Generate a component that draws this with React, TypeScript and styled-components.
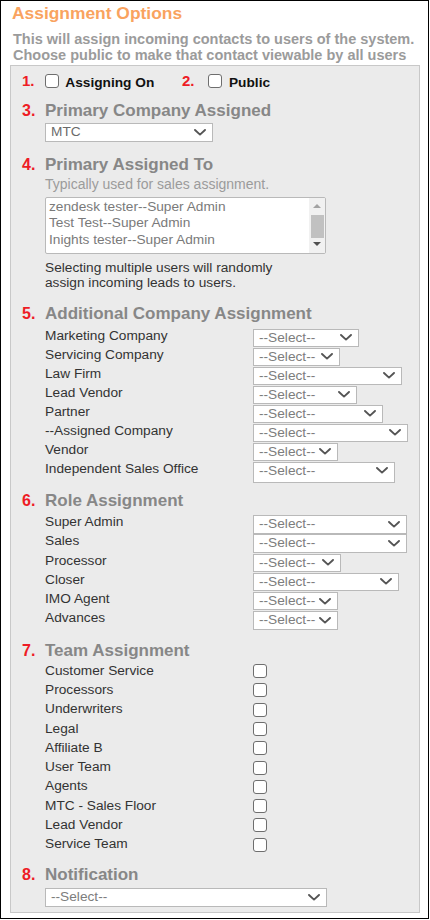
import React from "react";
import styled, { createGlobalStyle } from "styled-components";

const Global = createGlobalStyle`
  html, body { margin: 0; padding: 0; background: #fff; }
  body { font-family: "Liberation Sans", Arial, sans-serif; }
`;

const Frame = styled.div`
  box-sizing: border-box;
  width: 429px;
  height: 919px;
  border: 1px solid #000;
  padding: 2px 8px 0 9px;
  background: #fff;
`;

const Title = styled.h1`
  margin: 0 0 0 2px;
  font-size: 17.4px;
  line-height: 20px;
  font-weight: bold;
  color: #f9a35f;
`;

const Intro = styled.p`
  margin: 8px 0 0 3px;
  font-size: 14.5px;
  line-height: 16px;
  font-weight: bold;
  color: #9b9b9b;
  white-space: nowrap;
`;

const Panel = styled.div`
  margin-top: 2px;
  border: 1px solid #c8c8c8;
  background: #ebebeb;
  padding: 6px 11px 5.3px 11px;
`;

const TopRow = styled.div`
  display: flex;
  height: 22px;
`;

const OptGroup = styled.div<{ $w?: number }>`
  display: flex;
  align-items: flex-start;
  width: ${(p) => (p.$w ? `${p.$w}px` : "auto")};
`;

const Num = styled.span<{ $w?: number; $size?: number; $lh?: number }>`
  flex: none;
  width: ${(p) => p.$w ?? 23}px;
  color: #ee1c25;
  font-weight: bold;
  font-size: ${(p) => p.$size ?? 16}px;
  line-height: ${(p) => p.$lh ?? 20}px;
`;

const Box = styled.span<{ $mt?: number }>`
  flex: none;
  box-sizing: border-box;
  display: block;
  width: 14px;
  height: 14px;
  margin-top: ${(p) => p.$mt ?? 0}px;
  border: 1px solid #6e6e6e;
  border-radius: 3px;
  background: #fff;
`;

const OptLabel = styled.span<{ $ml: number }>`
  margin: 3.4px 0 0 ${(p) => p.$ml}px;
  font-size: 13.7px;
  line-height: 16px;
  font-weight: bold;
  color: #111;
`;

const Section = styled.section<{ $mt: number }>`
  margin-top: ${(p) => p.$mt}px;
`;

const HeadRow = styled.div`
  display: flex;
  align-items: baseline;
`;

const Heading = styled.h2`
  margin: 0;
  font-size: 17px;
  line-height: 20px;
  font-weight: bold;
  color: #878787;
  white-space: nowrap;
`;

const Body = styled.div<{ $mt: number }>`
  margin-left: 23px;
  padding-top: ${(p) => p.$mt}px;
`;

const Hint = styled.div`
  font-size: 14px;
  line-height: 16px;
  color: #9b9b9b;
  margin-top: 1px;
`;

const HelpText = styled.div`
  margin-top: 5.5px;
  font-size: 13.7px;
  line-height: 15px;
  color: #333;
`;

const SelectBox = styled.div<{ $w: number; $h?: number; $dark?: boolean }>`
  box-sizing: border-box;
  width: ${(p) => p.$w}px;
  height: ${(p) => p.$h ?? 18}px;
  border: 1px solid #b9b9b9;
  background: #fff;
  display: flex;
  align-items: flex-start;
  justify-content: space-between;
  padding: 0 6px 0 5px;
  font-size: 13.7px;
  line-height: 16px;
  color: ${(p) => (p.$dark ? "#6a6a6a" : "#7d7d7d")};
  white-space: nowrap;
`;

const Chevron = styled.svg`
  flex: none;
  margin-top: 4.6px;
  width: 12px;
  height: 7px;
`;

const ListBox = styled.div`
  box-sizing: border-box;
  width: 281px;
  height: 57px;
  margin-top: 5px;
  border: 1px solid #b9b9b9;
  border-radius: 2px;
  background: #fff;
  display: flex;
  overflow: hidden;
`;

const ListItems = styled.div`
  flex: 1;
  padding: 0.6px 0 0 3px;
  font-size: 13.7px;
  line-height: 16.8px;
  color: #7a7a7a;
  white-space: nowrap;
  overflow: hidden;
`;

const ScrollBar = styled.div`
  flex: none;
  width: 16px;
  background: #f1f1f1;
  display: flex;
  flex-direction: column;
  align-items: center;
`;

const ArrowUp = styled.span`
  margin-top: 5.5px;
  width: 0;
  height: 0;
  border-left: 4px solid transparent;
  border-right: 4px solid transparent;
  border-bottom: 4px solid #a3a3a3;
`;

const Thumb = styled.span`
  margin-top: 7.5px;
  width: 13px;
  height: 22.7px;
  background: #c1c1c1;
`;

const ArrowDown = styled.span`
  margin-top: 4px;
  width: 0;
  height: 0;
  border-left: 4px solid transparent;
  border-right: 4px solid transparent;
  border-top: 4px solid #505050;
`;

const FieldRow = styled.div<{ $h: number }>`
  display: grid;
  grid-template-columns: 208px auto;
  align-items: start;
  height: ${(p) => p.$h}px;
`;

const FieldLabel = styled.span`
  font-size: 13.7px;
  line-height: 14px;
  color: #333;
  white-space: nowrap;
`;

const Rows = styled.div<{ $mt: number }>`
  margin-top: ${(p) => p.$mt}px;
`;

const ChevronIcon = () => (
  <Chevron viewBox="0 0 12 7">
    <polyline
      points="1,1 6,5.6 11,1"
      fill="none"
      stroke="#555"
      strokeWidth="1.9"
      strokeLinecap="round"
      strokeLinejoin="round"
    />
  </Chevron>
);

const Select = ({ w, h, text = "--Select--", dark }: { w: number; h?: number; text?: string; dark?: boolean }) => (
  <SelectBox $w={w} $h={h} $dark={dark}>
    <span>{text}</span>
    <ChevronIcon />
  </SelectBox>
);

const companyRows: [string, number, number?][] = [
  ["Marketing Company", 106],
  ["Servicing Company", 87],
  ["Law Firm", 149],
  ["Lead Vendor", 104],
  ["Partner", 130],
  ["--Assigned Company", 155],
  ["Vendor", 85],
  ["Independent Sales Office", 142, 21],
];

const roleRows: [string, number][] = [
  ["Super Admin", 154],
  ["Sales", 154],
  ["Processor", 88],
  ["Closer", 146],
  ["IMO Agent", 85],
  ["Advances", 85],
];

const teams = [
  "Customer Service",
  "Processors",
  "Underwriters",
  "Legal",
  "Affiliate B",
  "User Team",
  "Agents",
  "MTC - Sales Floor",
  "Lead Vendor",
  "Service Team",
];

const SectionHead = ({ n, title }: { n: number; title: string }) => (
  <HeadRow>
    <Num>{n}.</Num>
    <Heading>{title}</Heading>
  </HeadRow>
);

export default function App() {
  return (
    <>
      <Global />
      <Frame>
        <Title>Assignment Options</Title>
        <Intro>
          This will assign incoming contacts to users of the system.
          <br />
          Choose public to make that contact viewable by all users
        </Intro>
        <Panel>
          <TopRow>
            <OptGroup $w={160}>
              <Num $size={15} $lh={18}>1.</Num>
              <Box $mt={2.3} />
              <OptLabel $ml={6.3}>Assigning On</OptLabel>
            </OptGroup>
            <OptGroup>
              <Num $size={15} $lh={18} $w={26.3}>2.</Num>
              <Box $mt={2.3} />
              <OptLabel $ml={6.7}>Public</OptLabel>
            </OptGroup>
          </TopRow>

          <Section $mt={7}>
            <SectionHead n={3} title="Primary Company Assigned" />
            <Body $mt={2}>
              <Select w={168} h={19} text="MTC" dark />
            </Body>
          </Section>

          <Section $mt={13}>
            <SectionHead n={4} title="Primary Assigned To" />
            <Body $mt={0}>
              <Hint>Typically used for sales assignment.</Hint>
              <ListBox>
                <ListItems>
                  <div>zendesk tester--Super Admin</div>
                  <div>Test Test--Super Admin</div>
                  <div>Inights tester--Super Admin</div>
                </ListItems>
                <ScrollBar>
                  <ArrowUp />
                  <Thumb />
                  <ArrowDown />
                </ScrollBar>
              </ListBox>
              <HelpText>
                Selecting multiple users will randomly
                <br />
                assign incoming leads to users.
              </HelpText>
            </Body>
          </Section>

          <Section $mt={14.7}>
            <SectionHead n={5} title="Additional Company Assignment" />
            <Body $mt={4.5}>
              {companyRows.map(([label, w, h]) => (
                <FieldRow key={label} $h={h ?? 19}>
                  <FieldLabel>{label}</FieldLabel>
                  <Select w={w} h={h} />
                </FieldRow>
              ))}
            </Body>
          </Section>

          <Section $mt={8.8}>
            <SectionHead n={6} title="Role Assignment" />
            <Body $mt={3.8}>
              {roleRows.map(([label, w], i) => (
                <FieldRow key={label} $h={i === roleRows.length - 1 ? 18.4 : 19.2}>
                  <FieldLabel>{label}</FieldLabel>
                  <Select w={w} h={18.4} />
                </FieldRow>
              ))}
            </Body>
          </Section>

          <Section $mt={11.8}>
            <SectionHead n={7} title="Team Assignment" />
            <Rows $mt={2.3}>
              <Body $mt={0}>
                {teams.map((t) => (
                  <FieldRow key={t} $h={19.27}>
                    <FieldLabel>{t}</FieldLabel>
                    <Box $mt={0.5} />
                  </FieldRow>
                ))}
              </Body>
            </Rows>
          </Section>

          <Section $mt={8.4}>
            <SectionHead n={8} title="Notification" />
            <Body $mt={3.4}>
              <Select w={282} h={18.4} />
            </Body>
          </Section>
        </Panel>
      </Frame>
    </>
  );
}
